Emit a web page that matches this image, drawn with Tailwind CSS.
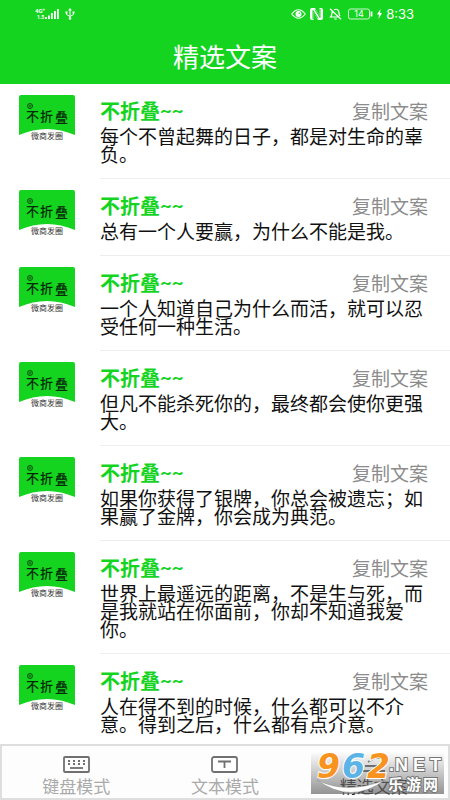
<!DOCTYPE html>
<html lang="zh-CN">
<head>
    <meta charset="UTF-8">
    <meta name="viewport" content="width=device-width, initial-scale=1.0">
    <title>精选文案</title>
    <script src="https://cdn.jsdelivr.net/npm/@tailwindcss/browser@4"></script>
</head>
<body class="h-screen flex flex-col overflow-hidden bg-white font-['Noto_Sans_CJK_SC',sans-serif]">
    <!-- Header -->
    <header class="h-[84px] shrink-0 bg-[#14d41f] text-white">
        <div class="h-7 flex items-center justify-between pl-[35px] pr-9">
            <div class="flex items-center gap-1.5">
                <svg class="w-6 h-3" viewBox="0 0 24 12" fill="white" aria-label="4G">
                    <text x="0" y="5" font-size="6" font-weight="700" font-family="Roboto">4G⁺</text>
                    <text x="2" y="11" font-size="5" font-weight="700" font-family="Roboto">1.5</text>
                    <path d="M10 9h2v2h-2zM13 7.500h1.800V11H13zM16 5h1.800v6H16zM19 3h1.800v8H19zM22 1h1.800v10H22z"/>
                </svg>
                <svg class="w-[10px] h-3" viewBox="0 0 10 12" fill="none" stroke="white">
                    <path d="M5 2v8M1.500 4.500v2L5 8.500l3.500-2v-2"/>
                    <path d="M5 0l2 2.500H3zM.5 3.500h2v2h-2zM7.500 3.500h2v2h-2z" fill="white" stroke="none"/>
                    <circle cx="5" cy="10.500" r="1.300" fill="white" stroke="none"/>
                </svg>
            </div>
            <div class="flex items-center gap-1">
                <svg class="w-[15px] h-3" viewBox="0 0 15 12" fill="none" stroke="white" stroke-width="1.200">
                    <path d="M.8 6Q7.500-2.500 14.200 6 7.500 14.500.8 6z"/>
                    <circle cx="7.500" cy="6" r="2.400" fill="white"/>
                    <circle cx="8.300" cy="5.200" r=".7" fill="#14d41f" stroke="none"/>
                </svg>
                <svg class="w-[13px] h-3" viewBox="0 0 13 12">
                    <path d="M2 0h3l4.500 8V0H11q2 0 2 2v8q0 2-2 2H8L3.500 4v8H2q-2 0-2-2V2q0-2 2-2z" fill="white"/>
                    <path d="M3 11V2.500l5 8M10 1v8.500L5 1.500" fill="none" stroke="#14d41f"/>
                </svg>
                <svg class="w-[13px] h-3 ml-0.5" viewBox="0 0 13 12" fill="none" stroke="white" stroke-width="1.200">
                    <path d="M3.300 3.500C2.800 5.500 3.300 7 1.500 9h8.500M5 1.800c3-1.500 5 .3 5 3.200 0 1.300.3 2.200 1 3M1 .8l11 10.500M5.300 11h2.400"/>
                </svg>
                <svg class="w-[25px] h-3 ml-0.5" viewBox="0 0 25 12" fill="none" stroke="white" stroke-width=".8">
                    <rect x=".5" y="1" width="21" height="10" rx="2"/>
                    <path d="M23.500 3.500v5" stroke-width="1.800"/>
                    <text x="11" y="9" text-anchor="middle" font-size="9" font-family="Inter" fill="white" stroke="none">14</text>
                </svg>
                <svg class="w-[5px] h-[10px]" viewBox="0 0 5 10" fill="white"><path d="M3.500 0L0 5.500h2L1.500 10 5 4H3z"/></svg>
                <span class="text-[13px] leading-4 font-['Inter']">8:33</span>
            </div>
        </div>
        <h1 class="h-14 text-center text-[26px] leading-[55px]">精选文案</h1>
    </header>

    <!-- List -->
    <main class="flex-1 min-h-0 overflow-hidden">
        <ul id="list"></ul>
    </main>

    <!-- Bottom Tabs -->
    <nav class="relative h-14 shrink-0 grid grid-cols-3 border-2 border-[#dedede] bg-[#fdfdfd] text-[17px] leading-5 text-[#aaaaaa]">
        <button class="flex flex-col items-center pt-2.5 gap-[3px]">
            <svg class="w-[27px] h-[17px] shrink-0" viewBox="0 0 27 17" fill="none" stroke="#707070">
                <rect x="1" y="1" width="25" height="15" rx="1" stroke-width="1.800"/>
                <path d="M5 5h2m3 0h2m3 0h2m3 0h2M5 8h2m3 0h2m3 0h2m3 0h2" stroke-width="2"/>
                <path d="M7 12h13" stroke-width="1.800"/>
            </svg>
            <span>键盘模式</span>
        </button>
        <button class="flex flex-col items-center pt-2.5 gap-[3px]">
            <svg class="w-[27px] h-[17px] shrink-0" viewBox="0 0 27 17" fill="none" stroke="#707070" stroke-width="1.800">
                <rect x="1" y="1" width="25" height="15" rx="2"/>
                <path d="M7 5.500h13M13.500 5.500V12"/>
            </svg>
            <span>文本模式</span>
        </button>
        <button class="flex flex-col items-center pt-2.5 gap-[3px] text-[#111111]">
            <svg class="w-[27px] h-[17px] shrink-0" viewBox="0 0 27 17" fill="none" stroke="#444444" stroke-width="2">
                <path d="M8 6l7-4h9M5 10h20M3 15h22"/>
            </svg>
            <span>精选文案</span>
        </button>

        <!-- Watermark -->
        <div class="absolute right-1 top-1.5 w-[133px] h-[42px] bg-linear-to-b from-white/30 to-[#666666]/70">
            <svg class="w-full h-full overflow-visible" viewBox="0 0 133 42" role="img" aria-label="962.NET 乐游网">
                <path d="M6 28Q36 43 74 28 40 53 6 28z" fill="white" stroke="#888888" stroke-width=".5"/>
                <g font-family="DejaVu Sans" font-weight="700" font-style="italic" font-size="33" stroke="white" stroke-width="2" paint-order="stroke">
                    <text x="6" y="26" fill="#f7931e">9</text>
                    <text x="31" y="26" fill="#5bb4e5">6</text>
                    <text x="56" y="26" fill="#f7931e">2</text>
                </g>
                <g fill="white" stroke="#777777" stroke-width="2" paint-order="stroke" font-weight="700">
                    <text x="78" y="19" font-size="18" font-family="Liberation Sans">.</text>
                    <text x="84" y="19" font-size="18" font-family="Liberation Sans">N</text>
                    <text x="102" y="19" font-size="18" font-family="Liberation Sans">E</text>
                    <text x="119" y="19" font-size="18" font-family="Liberation Sans">T</text>
                    <text x="77" y="38" font-size="15" font-family="Noto Sans CJK SC">乐</text>
                    <text x="95" y="38" font-size="15" font-family="Noto Sans CJK SC">游</text>
                    <text x="112" y="38" font-size="15" font-family="Noto Sans CJK SC">网</text>
                </g>
            </svg>
        </div>
    </nav>

    <!-- Row template -->
    <template id="rowTemplate">
        <li class="flex gap-[25px] pl-[19px]">
            <svg class="w-14 h-[46px] shrink-0 mt-[11px]" viewBox="0 0 56 46" role="img" aria-label="不折叠 微商发圈">
                <path d="M2 0h52q2 0 2 2v38Q28 28 0 40V2q0-2 2-2z" fill="#14d41f"/>
                <circle cx="11" cy="11" r="2.500" fill="none" stroke="#0a4a0c"/>
                <path d="M9.500 11h3M11 9.500v3" stroke="#0a4a0c" stroke-width=".7"/>
                <g font-family="Noto Sans CJK SC" font-weight="500" fill="#062a08">
                    <text x="7" y="26" font-size="13">不</text>
                    <text x="21" y="26" font-size="13">折</text>
                    <text x="36" y="27" font-size="13">叠</text>
                </g>
                <text x="12" y="44" font-size="8" font-family="Noto Sans CJK SC" fill="#333333">微商发圈</text>
            </svg>
            <div class="flex-1 border-b border-[#eeeeee] pt-[11px] pb-[15px]">
                <div class="flex justify-between pr-[22px] leading-8">
                    <h2 class="text-[20px] font-bold text-[#14d41f]">不折叠~~</h2>
                    <button class="text-[19px] text-[#8c8c8c]">复制文案</button>
                </div>
                <p class="mr-6 text-[19px] leading-[18px] text-[#111111]"></p>
            </div>
        </li>
    </template>

    <script>
        const quotes = [
            '每个不曾起舞的日子，都是对生命的辜负。',
            '总有一个人要赢，为什么不能是我。',
            '一个人知道自己为什么而活，就可以忍受任何一种生活。',
            '但凡不能杀死你的，最终都会使你更强大。',
            '如果你获得了银牌，你总会被遗忘；如果赢了金牌，你会成为典范。',
            '世界上最遥远的距离，不是生与死，而是我就站在你面前，你却不知道我爱你。',
            '人在得不到的时候，什么都可以不介意。得到之后，什么都有点介意。'
        ];

        const list = document.getElementById('list');
        const rowTemplate = document.getElementById('rowTemplate');

        quotes.forEach(quote => {
            const row = rowTemplate.content.cloneNode(true);
            row.querySelector('p').textContent = quote;
            row.querySelector('button').addEventListener('click', () => {
                navigator.clipboard.writeText(quote);
            });
            list.appendChild(row);
        });
    </script>
</body>
</html>
